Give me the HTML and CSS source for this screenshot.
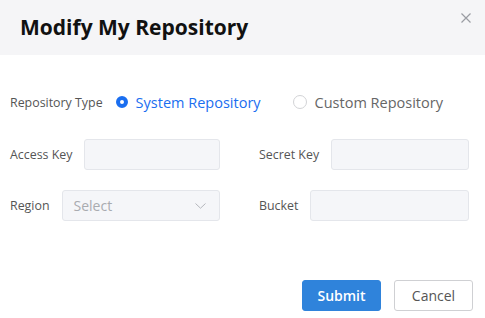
FILE: index.html
```html
<!DOCTYPE html>
<html lang="en">
<head>
  <meta charset="UTF-8">
  <title>Modify My Repository</title>
  <link rel="stylesheet" href="styles.css">
</head>
<body>
  <div class="dialog">
    <div class="dialog-header">
      <h1>Modify My Repository</h1>
      <span class="close">
        <svg width="10" height="10" viewBox="0 0 10 10"><path d="M0.5 0.5L9.5 9.5M9.5 0.5L0.5 9.5" stroke="#9a9ca3" stroke-width="1.2"/></svg>
      </span>
    </div>

    <div class="dialog-body">
      <!-- type -->
      <div class="type-row">
        <span class="label">Repository Type</span>
        <label class="radio checked"><span class="dot"></span>System Repository</label>
        <label class="radio"><span class="dot"></span>Custom Repository</label>
      </div>

      <div class="row">
        <div class="field">
          <span class="label">Access Key</span>
          <div class="input"></div>
        </div>
        <div class="field">
          <span class="label">Secret Key</span>
          <div class="input"></div>
        </div>
      </div>

      <div class="row">
        <div class="field">
          <span class="label">Region</span>
          <div class="input select">
            <span class="placeholder">Select</span>
            <svg width="11" height="6" viewBox="0 0 11 6"><path d="M0.5 0.5L5.5 5.2L10.5 0.5" fill="none" stroke="#b4b6bc" stroke-width="1"/></svg>
          </div>
        </div>
        <div class="field">
          <span class="label">Bucket</span>
          <div class="input"></div>
        </div>
      </div>
    </div>

    <div class="dialog-footer">
      <button class="btn primary">Submit</button>
      <button class="btn">Cancel</button>
    </div>
  </div>
</body>
</html>
```

FILE: styles.css
```css
body {
  margin: 0;
  font-family: "Open Sans", "Noto Sans", sans-serif;
  background: #fff;
}
.dialog {
  width: 485px;
  height: 318px;
  background: #fff;
}
.dialog-header {
  height: 55px;
  background: #f5f5f7;
  display: flex;
  align-items: center;
  justify-content: space-between;
  padding: 0 14px 0 20px;
  box-sizing: border-box;
}
.dialog-header h1 {
  margin: 0 0 2px;
  font-size: 21px;
  font-weight: 700;
  color: #111;
}
.close {
  align-self: flex-start;
  margin-top: 13px;
  line-height: 0;
}
.dialog-body {
  padding: 34px 16px 0 10px;
}
.label {
  font-size: 12.4px;
  color: #555;
  white-space: nowrap;
}
.type-row {
  display: flex;
  align-items: center;
  height: 26px;
  white-space: nowrap;
}
.type-row .label {
  margin-right: 13px;
}
.radio {
  display: flex;
  align-items: center;
  flex-shrink: 0;
  font-size: 14.5px;
  color: #666;
}
.radio .dot {
  width: 12px;
  height: 12px;
  border: 1px solid #d2d3d6;
  border-radius: 50%;
  margin-right: 8px;
  box-sizing: content-box;
}
.radio.checked {
  color: #1a6ef0;
  margin-right: 32px;
}
.radio.checked .dot {
  width: 4px;
  height: 4px;
  border: 4.5px solid #1a6ef0;
  background: #fff;
}
.row {
  display: grid;
  grid-template-columns: 210px 210px;
  column-gap: 39px;
  margin-top: 24px;
}
.row + .row {
  margin-top: 20px;
}
.field {
  display: flex;
  align-items: center;
  gap: 12px;
}
.input {
  flex: 1;
  height: 31px;
  background: #f5f6f9;
  border: 1px solid #e4e6eb;
  border-radius: 3px;
  box-sizing: border-box;
}
.select {
  display: flex;
  align-items: center;
  justify-content: space-between;
  padding: 0 13px 0 11px;
}
.placeholder {
  font-size: 14px;
  color: #a9abb0;
}
.dialog-footer {
  display: flex;
  justify-content: flex-end;
  gap: 13px;
  padding: 59px 12px 0 0;
}
.btn {
  width: 79px;
  height: 31px;
  font-family: inherit;
  font-size: 14px;
  color: #555;
  background: #fff;
  border: 1px solid #cfd0d3;
  border-radius: 3px;
}
.btn.primary {
  background: #2f83db;
  border-color: #2f83db;
  color: #fff;
  font-weight: 600;
}
```
